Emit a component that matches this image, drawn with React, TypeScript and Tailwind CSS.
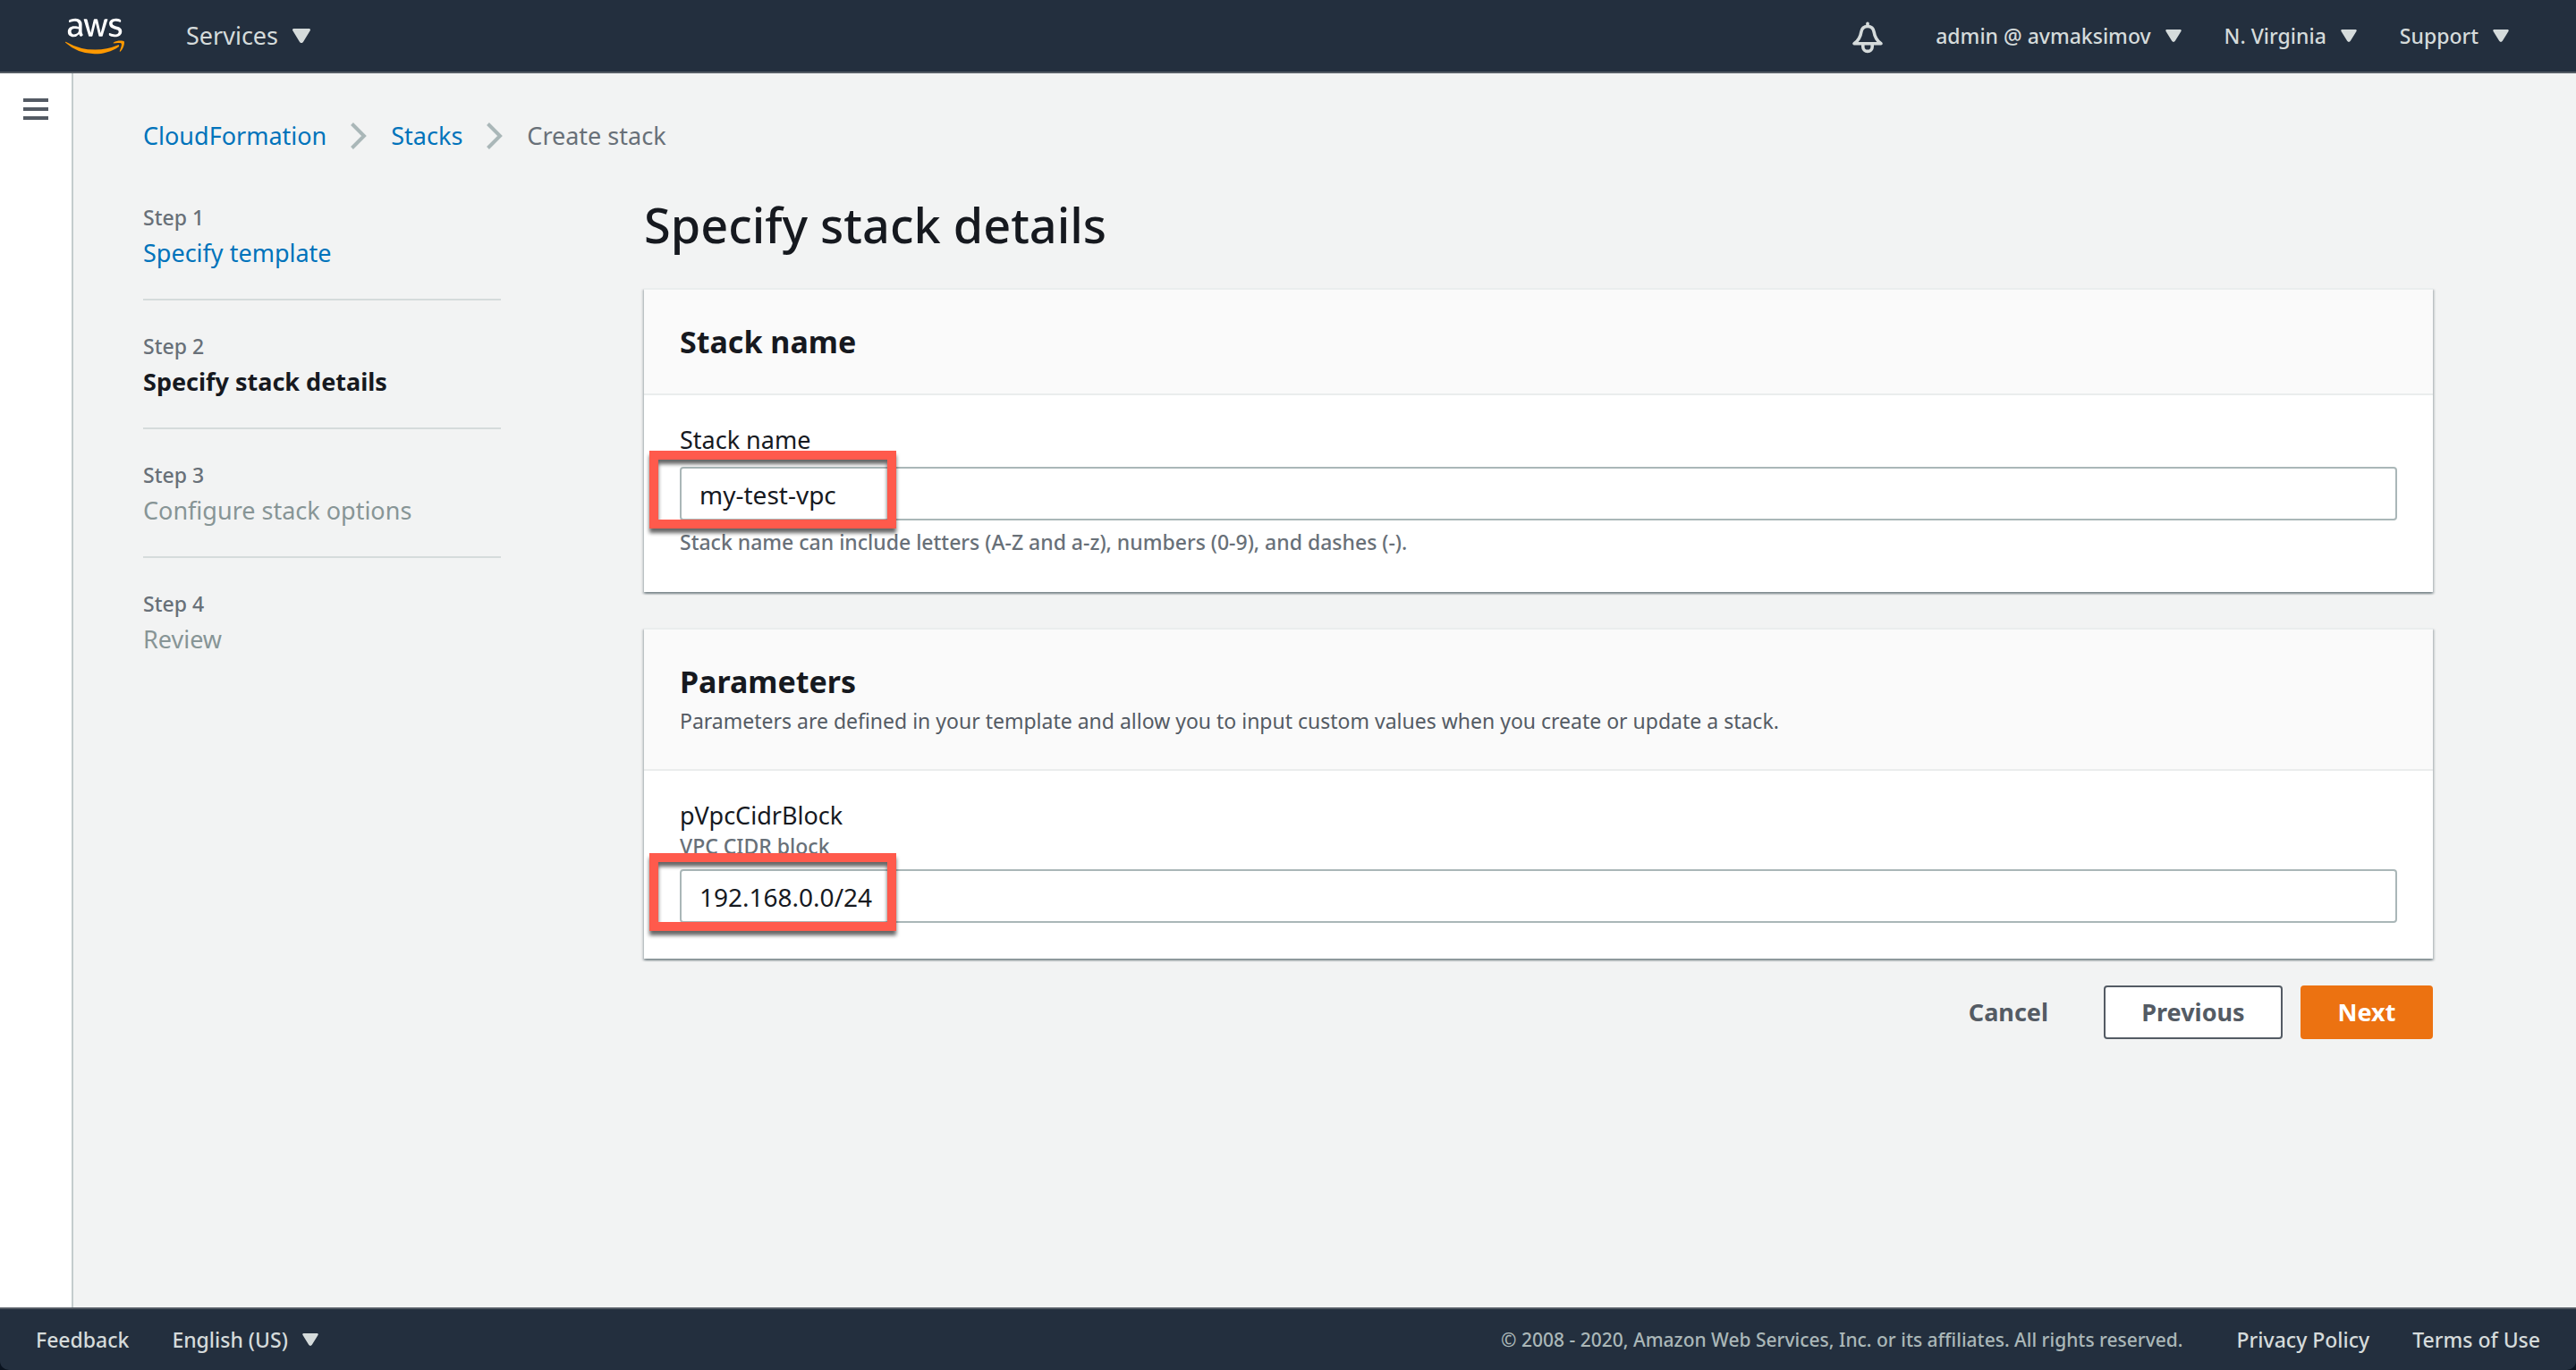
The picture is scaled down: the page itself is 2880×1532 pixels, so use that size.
import { useState } from "react";
import type { ReactNode } from "react";
import { FaAws } from "react-icons/fa";

function Caret({ large = false }: { large?: boolean }) {
  return (
    <svg
      viewBox="0 0 20 16"
      className={large ? "h-4 w-5" : "h-[14px] w-[18px]"}
      fill="currentColor"
      aria-hidden="true"
    >
      <path d="M1.6 0h16.8c1.3 0 2 1.2 1.3 2.3l-7.6 12.4c-1 1.7-3.2 1.7-4.2 0L.3 2.3C-.4 1.2.3 0 1.6 0z" />
    </svg>
  );
}

function Bell() {
  return (
    <svg viewBox="0 0 36 36" className="size-9" fill="none" stroke="currentColor" aria-hidden="true">
      <path
        d="M18 5.500c-4.200 0-6.600 2.600-7.200 6.500-.8 5.500-3.300 9.600-7.800 12.800h30c-4.500-3.200-7-7.300-7.800-12.800-.6-3.900-3-6.500-7.200-6.500z"
        strokeWidth="3.6"
        strokeLinejoin="round"
      />
      <path d="M18 2.200v3" strokeWidth="3.600" strokeLinecap="round" />
      <path d="M12.800 25v3.200a5.200 5.200 0 0 0 10.400 0V25" strokeWidth="3.600" />
    </svg>
  );
}

function AwsLogo() {
  return (
    <a href="#home" aria-label="AWS" className="relative block h-[53px] w-[66px]">
      <FaAws className="h-[53px] w-[66px] text-white [clip-path:inset(0_0_42%_0)]" />
      <FaAws className="absolute top-0 left-0 h-[53px] w-[66px] text-[#ff9900] [clip-path:inset(58%_0_0_0)]" />
    </a>
  );
}

function Header() {
  return (
    <header className="flex h-[82px] items-center border-b-2 border-[#545b64] bg-[#232f3e] pr-[75px] pl-[73px] text-[#d5dbdb]">
      <AwsLogo />
      <nav className="ml-[69px] flex flex-1 items-center justify-between">
        <button type="button" className="flex items-center gap-4 text-[27px] leading-10 font-normal">
          Services <Caret large />
        </button>
        <div className="flex items-center text-[23px] leading-10">
          <button type="button" aria-label="Notifications" className="mr-[58px] pt-1">
            <Bell />
          </button>
          <button type="button" className="mr-12 flex items-center gap-4">
            admin @ avmaksimov <Caret />
          </button>
          <button type="button" className="mr-12 flex items-center gap-4">
            N. Virginia <Caret />
          </button>
          <button type="button" className="flex items-center gap-4">
            Support <Caret />
          </button>
        </div>
      </nav>
    </header>
  );
}

function Chevron() {
  return (
    <svg viewBox="0 0 18 30" className="h-[30px] w-[18px]" fill="none" stroke="#aab7b8" strokeWidth="4" aria-hidden="true">
      <path d="M1.500 1.500 15 15 1.500 28.500" />
    </svg>
  );
}

function Breadcrumbs() {
  return (
    <nav aria-label="Breadcrumb" className="flex items-center gap-[27px] text-[27px] leading-10 font-normal">
      <a href="#cloudformation" className="text-[#0073bb]">CloudFormation</a>
      <Chevron />
      <a href="#stacks" className="text-[#0073bb]">Stacks</a>
      <Chevron />
      <span className="text-[#687078]">Create stack</span>
    </nav>
  );
}

const steps = [
  { name: "Specify template", state: "done" },
  { name: "Specify stack details", state: "current" },
  { name: "Configure stack options", state: "todo" },
  { name: "Review", state: "todo" },
];

function Steps() {
  return (
    <ol className="mt-[11px] w-[400px] shrink-0 divide-y-2 divide-[#d5dbdb]">
      {steps.map((step, i) => (
        <li key={step.name} className="py-[31px] leading-10 first:pt-0">
          <div className="text-[23px] text-[#687078]">Step {i + 1}</div>
          {step.state === "done" && (
            <a href="#template" className="block text-[27px] font-normal text-[#0073bb]">{step.name}</a>
          )}
          {step.state === "current" && (
            <div className="text-[27px] font-bold text-[#16191f]">{step.name}</div>
          )}
          {step.state === "todo" && <div className="text-[27px] font-normal text-[#879596]">{step.name}</div>}
        </li>
      ))}
    </ol>
  );
}

function Card({ title, description, children }: { title: string; description?: string; children: ReactNode }) {
  return (
    <section className="border-t-2 border-[#eaeded] bg-white shadow-[0_2px_2px_rgba(0,28,36,0.3),2px_2px_2px_rgba(0,28,36,0.15),-2px_2px_2px_rgba(0,28,36,0.15)]">
      <div className="border-b-2 border-[#eaeded] bg-[#fafafa] px-10 py-[34px]">
        <h2 className="text-[34px] leading-[48px] font-bold text-[#16191f]">{title}</h2>
        {description && <p className="text-[23px] leading-10 font-normal text-[#545b64]">{description}</p>}
      </div>
      <div className="px-10 pt-8">{children}</div>
    </section>
  );
}

function MarkedInput({ id, value, onChange }: { id: string; value: string; onChange: (v: string) => void }) {
  return (
    <div className="relative">
      <input
        id={id}
        type="text"
        value={value}
        onChange={(e) => onChange(e.target.value)}
        className="block h-[60px] w-full rounded-[4px] border-2 border-[#aab7b8] bg-white px-5 pt-0.5 text-[28px] font-normal text-[#16191f] outline-none"
      />
      <div className="pointer-events-none absolute -top-[18px] -left-[34px] h-[87px] w-[276px] border-[10px] border-[#ff5a4c] drop-shadow-[0_5px_2px_rgba(0,0,0,0.6)]" />
    </div>
  );
}

function Footer() {
  return (
    <div className="bg-[#0b1420]">
      <footer className="flex h-[70px] items-center justify-between rounded-b-[10px] border-t-2 border-[#545b64] bg-[#232f3e] px-10 text-[23px] leading-10 text-[#d5dbdb]">
        <div className="flex items-center gap-12">
          <a href="#feedback">Feedback</a>
          <button type="button" className="flex items-center gap-4">
            English (US) <Caret />
          </button>
        </div>
        <div className="flex items-center">
          <span className="mr-[60px] text-[21px] text-[#aab7b8]">
            © 2008 - 2020, Amazon Web Services, Inc. or its affiliates. All rights reserved.
          </span>
          <a href="#privacy" className="mr-12">Privacy Policy</a>
          <a href="#terms">Terms of Use</a>
        </div>
      </footer>
    </div>
  );
}

export default function App() {
  const [stackName, setStackName] = useState("my-test-vpc");
  const [cidr, setCidr] = useState("192.168.0.0/24");

  return (
    <div className="flex min-h-screen flex-col bg-[#f2f3f3] font-['Noto_Sans',sans-serif] font-medium">
      <Header />
      <div className="flex flex-1">
        <aside className="w-[82px] shrink-0 border-r-2 border-[#c4cccd] bg-white">
          <button type="button" aria-label="Open navigation" className="mt-7 ml-[26px] flex flex-col gap-1.5">
            <span className="h-1 w-7 bg-[#545b64]" />
            <span className="h-1 w-7 bg-[#545b64]" />
            <span className="h-1 w-7 bg-[#545b64]" />
          </button>
        </aside>
        <main className="flex-1 pt-[50px] pr-40 pl-[78px]">
          <Breadcrumbs />
          <div className="mt-10 flex gap-40">
            <Steps />
            <form className="flex-1" onSubmit={(e) => e.preventDefault()}>
              <h1 className="mb-8 text-[54px] leading-[78px] text-[#16191f]">Specify stack details</h1>

              <Card title="Stack name">
                <label htmlFor="stack-name" className="mb-3 block text-[27px] leading-9 font-normal text-[#16191f]">
                  Stack name
                </label>
                <MarkedInput id="stack-name" value={stackName} onChange={setStackName} />
                <p className="mt-1 pb-9 text-[23px] leading-10 text-[#687078]">
                  Stack name can include letters (A-Z and a-z), numbers (0-9), and dashes (-).
                </p>
              </Card>

              <div className="mt-10">
                <Card
                  title="Parameters"
                  description="Parameters are defined in your template and allow you to input custom values when you create or update a stack."
                >
                  <label htmlFor="cidr" className="block text-[27px] leading-9 font-normal text-[#16191f]">
                    pVpcCidrBlock
                  </label>
                  <p className="mb-2.5 text-[23px] leading-8 text-[#687078]">VPC CIDR block</p>
                  <div className="pb-10">
                    <MarkedInput id="cidr" value={cidr} onChange={setCidr} />
                  </div>
                </Card>
              </div>

              <div className="mt-[30px] flex justify-end gap-5 text-[27px] font-bold">
                <button type="button" className="h-[60px] px-[42px] text-[#545b64]">
                  Cancel
                </button>
                <button type="button" className="h-[60px] w-[200px] rounded-[4px] border-2 border-[#545b64] bg-white text-[#545b64]">
                  Previous
                </button>
                <button type="submit" className="h-[60px] w-[148px] rounded-[4px] bg-[#ec7211] text-white">
                  Next
                </button>
              </div>
            </form>
          </div>
        </main>
      </div>
      <Footer />
    </div>
  );
}
